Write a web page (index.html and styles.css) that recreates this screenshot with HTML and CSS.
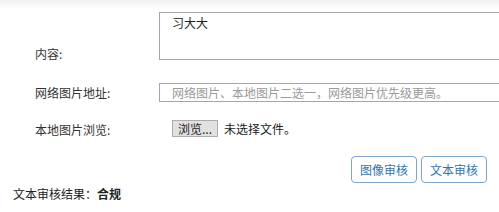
FILE: index.html
```html
<!DOCTYPE html>
<html lang="zh-CN">
<head>
<meta charset="utf-8">
<title>审核</title>
<link rel="stylesheet" href="styles.css">
</head>
<body>
<div class="page">
  <div class="row row-content">
    <label class="label">内容:</label>
    <div class="textarea">习大大</div>
  </div>
  <div class="row row-url">
    <label class="label">网络图片地址:</label>
    <div class="input"><span class="placeholder">网络图片、本地图片二选一，网络图片优先级更高。</span></div>
  </div>
  <div class="row row-file">
    <label class="label">本地图片浏览:</label>
    <div class="file">
      <span class="browse">浏览...</span>
      <span class="file-name">未选择文件。</span>
    </div>
  </div>
  <div class="actions">
    <button class="btn">图像审核</button>
    <button class="btn">文本审核</button>
  </div>
  <div class="result">文本审核结果：<b class="result-value">合规</b></div>
</div>
</body>
</html>
```

FILE: styles.css
```css
html, body {
  margin: 0;
  padding: 0;
}
body {
  width: 499px;
  height: 212px;
  overflow: hidden;
  background: linear-gradient(#f1f1f1 0px, #ffffff 9px);
  font-family: "Noto Sans CJK SC", "Noto Sans", sans-serif;
  font-size: 12px;
  color: #333;
}
.page {
  display: flex;
  flex-direction: column;
}
.row {
  display: flex;
  align-items: flex-start;
}
.label {
  box-sizing: border-box;
  width: 159px;
  padding-left: 35px;
  line-height: 16px;
  flex-shrink: 0;
}
.row-content {
  margin-top: 12px;
}
.row-content .label {
  margin-top: 34px;
}
.textarea {
  box-sizing: border-box;
  width: 360px;
  height: 48px;
  flex-shrink: 0;
  border: 1px solid #a6a6a6;
  background: #fff;
  padding: 2px 12px;
  line-height: 16px;
  color: #222;
}
.row-url {
  margin-top: 21px;
}
.row-url .label,
.row-file .label {
  margin-top: 2px;
}
.input {
  box-sizing: border-box;
  width: 360px;
  height: 19px;
  flex-shrink: 0;
  border: 1px solid #a6a6a6;
  background: #fff;
  padding: 0 12px;
  line-height: 17px;
  white-space: nowrap;
}
.placeholder {
  color: #9a9a9a;
}
.row-file {
  margin-top: 18px;
}
.file {
  display: flex;
  align-items: center;
  margin-left: 13px;
}
.browse {
  box-sizing: border-box;
  height: 17px;
  line-height: 15px;
  padding: 0 5px;
  border: 1px solid #adadad;
  background: #e1e1e1;
  color: #222;
}
.file-name {
  margin-left: 6px;
  color: #222;
}
.actions {
  display: flex;
  justify-content: flex-end;
  gap: 4px;
  margin-top: 18px;
  padding-right: 12px;
}
.btn {
  box-sizing: border-box;
  height: 27px;
  width: 66px;
  padding: 0;
  border: 1px solid #7fa6cc;
  border-radius: 4px;
  background: #fff;
  color: #2f74b5;
  font-family: inherit;
  font-size: 12px;
}
.result {
  margin-top: 3px;
  padding-left: 13px;
  line-height: 16px;
  color: #222;
}
.result-value {
  font-weight: bold;
}
```
